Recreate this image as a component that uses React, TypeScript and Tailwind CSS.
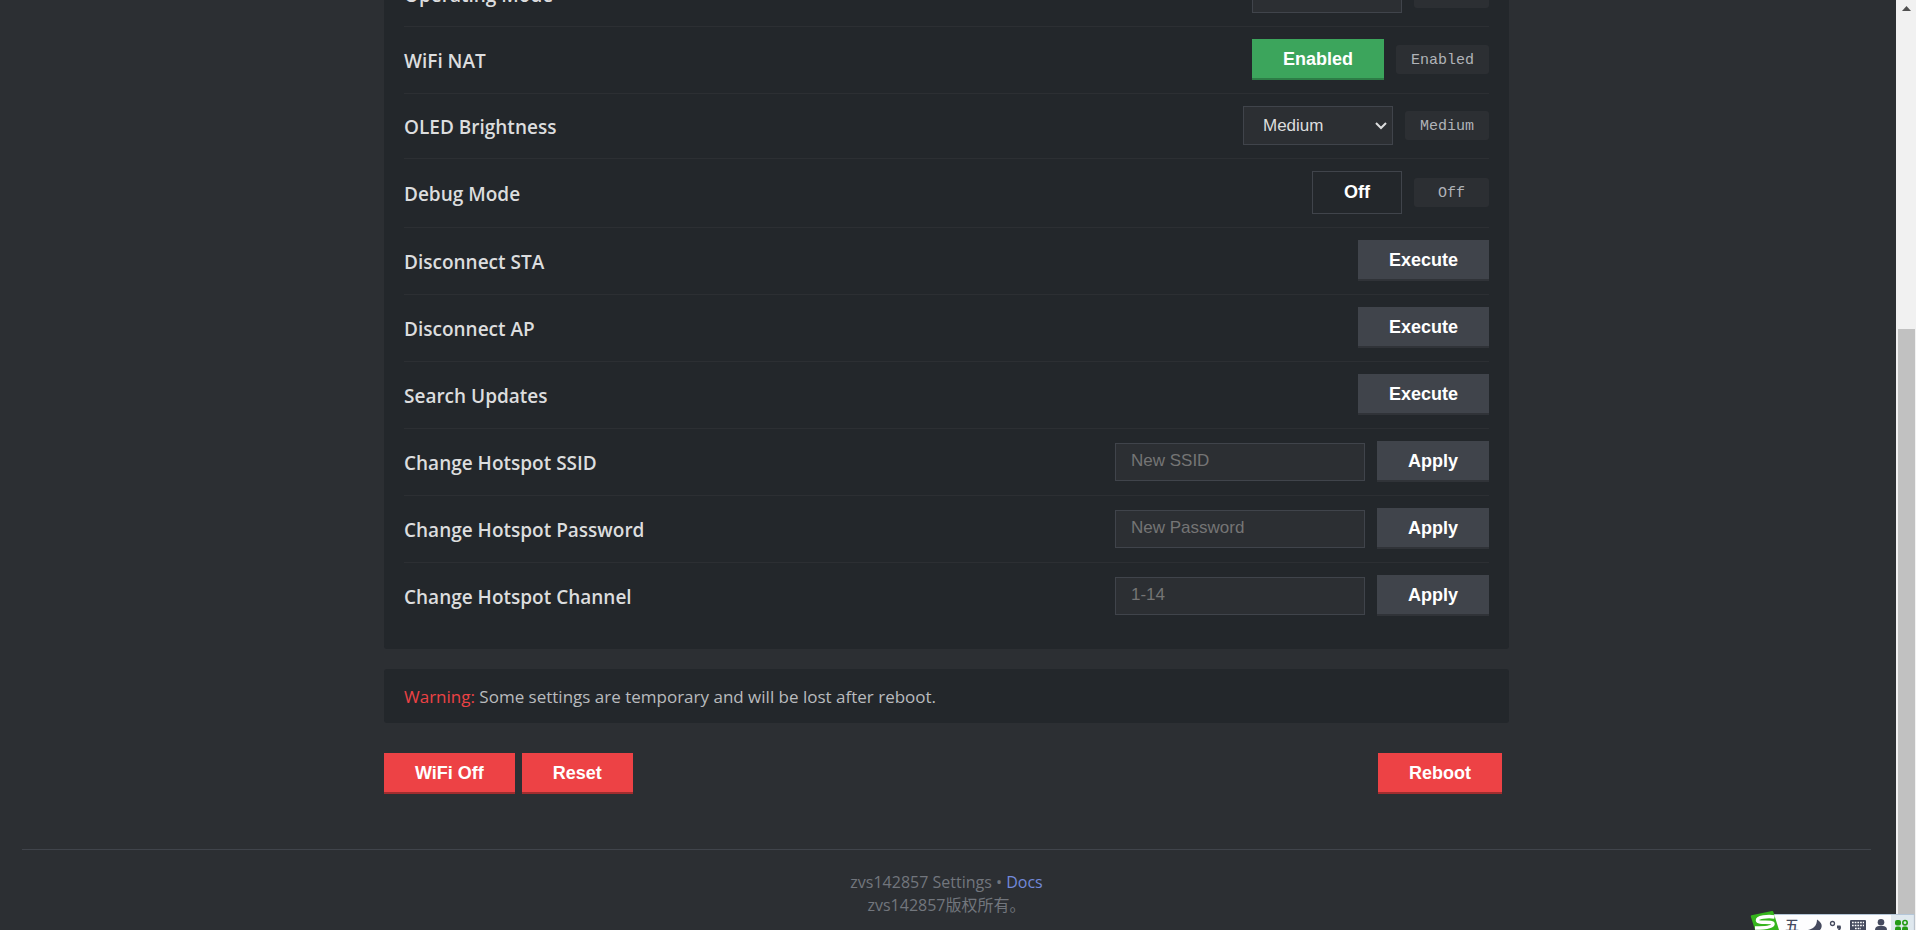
import { ReactNode } from 'react';
import clsx from 'clsx';

const tones = {
    gray: 'bg-[#40444b] border-b-2 border-[#303338]',
    green: 'bg-[#3ca55c] border-b-2 border-[#2d7d46]',
    red: 'bg-[#ed4245] border-b-2 border-[#a12d2f]',
    outline: 'border border-[#40444b] pb-[2px]',
};

function Button({ tone, className, children }: { tone: keyof typeof tones; className?: string; children: ReactNode }) {
    return (
        <button
            type="button"
            className={clsx(
                "shrink-0 px-[31px] text-lg font-bold text-white font-['Liberation_Sans',sans-serif]",
                tone === 'outline' ? 'h-[43px]' : 'h-[41px]',
                tones[tone],
                className
            )}
        >
            {children}
        </button>
    );
}

function Badge({ children }: { children: ReactNode }) {
    return (
        <span className="flex h-[29px] min-w-[75px] items-center justify-center rounded-[3px] bg-[#2c2f33] px-[15px] pt-[3px] text-[15px] text-[#b0b3b8] font-['Liberation_Mono',monospace]">
            {children}
        </span>
    );
}

function Row({ label, htmlFor, last, children }: { label: string; htmlFor?: string; last?: boolean; children: ReactNode }) {
    return (
        <div className={clsx('flex items-center justify-between pt-3 pb-[13px]', !last && 'border-b border-[#2c2f33]')}>
            <label htmlFor={htmlFor} className="pt-[2px] text-[19px] leading-6 font-semibold text-[#dcddde]">
                {label}
            </label>
            <div className="flex items-center gap-3">{children}</div>
        </div>
    );
}

function Select({ id, options, value }: { id: string; options: string[]; value: string }) {
    return (
        <div className="relative">
            <select
                id={id}
                defaultValue={value}
                className="block h-[39px] w-[150px] appearance-none border border-[#40444b] bg-[#2c2f33] px-[19px] text-[17px] text-[#dcddde] font-['Liberation_Sans',sans-serif]"
            >
                {options.map((o) => (
                    <option key={o}>{o}</option>
                ))}
            </select>
            <svg viewBox="0 0 12 8" className="pointer-events-none absolute top-4 right-[6px] h-2 w-3" fill="none" stroke="#dcddde" strokeWidth="2">
                <path d="M1 1l5 5 5-5" />
            </svg>
        </div>
    );
}

function TextInput({ id, placeholder }: { id: string; placeholder: string }) {
    return (
        <input
            id={id}
            placeholder={placeholder}
            className="h-[38px] w-[250px] border border-[#40444b] bg-[#2c2f33] px-[15px] pb-[2px] text-[17px] text-[#dcddde] placeholder:text-[#757575] font-['Liberation_Sans',sans-serif]"
        />
    );
}

// Input method toolbar that floats over the bottom right corner
function ImeBar() {
    return (
        <svg viewBox="0 0 168 20" className="absolute right-0 bottom-0 h-5 w-[168px]">
            <rect x="20" y="4" width="146" height="16" fill="#fdfdfe" />
            <rect x="143" y="5" width="22" height="15" fill="#dfe8ee" />
            <path d="M20 4.500h146v16" stroke="#b4c6d8" fill="none" />
            <path d="M3.500 5.200L24 1q1-.2 1.300.8L31 20H7L2.800 6.500q-.3-1 .7-1.300z" fill="#35b41c" />
            <path d="M26.500 7C20 6 9 7 9.500 10.500S25 10.500 25 14 14 18 7 18" stroke="#fff" strokeWidth="3.500" fill="none" />
            <text x="37" y="20" fontSize="14" fontWeight="500" fill="#454a5e" className="font-['Noto_Sans_CJK_SC',sans-serif]">五</text>
            <path d="M69 9.500c5 3 6 7 3 10.500H60c5-1 9-4 9-10.500z" fill="#454a5e" />
            <circle cx="84.500" cy="13.500" r="2" fill="none" stroke="#454a5e" strokeWidth="1.300" />
            <path d="M89 15.500h3.500c1 2 .3 3.500-.5 4.500h-2l.6-1.500H89z" fill="#454a5e" />
            <rect x="102" y="10" width="16" height="11" rx="1" fill="#454a5e" />
            <path d="M104 12.500h12M104 15.500h12M107 18.500h6" stroke="#fdfdfe" strokeWidth="1.500" strokeDasharray="1.700 1" />
            <circle cx="133" cy="12.300" r="3.300" fill="#454a5e" />
            <path d="M127 20c0-3 2-4 4-4h4c2 0 4 1 4 4z" fill="#454a5e" />
            <g fill="#259b16">
                <rect x="147" y="10" width="6" height="5.500" rx="2" />
                <rect x="147" y="16.500" width="6" height="5.500" rx="2" />
                <rect x="154" y="16.500" width="6" height="5.500" rx="2" />
            </g>
            <circle cx="157" cy="12.700" r="2.200" fill="none" stroke="#259b16" strokeWidth="1.600" />
        </svg>
    );
}

export default function App() {
    return (
        <div className="relative flex h-screen overflow-hidden bg-[#2c2f33] font-['Open_Sans','Noto_Sans_CJK_SC',sans-serif]">
            <div className="-mt-[38px] flex-1 pr-[25px] pl-[22px]">
                <main className="mx-auto max-w-[1125px]">
                    <section className="rounded-[3px] bg-[#23272b] px-5 pb-5">
                        <Row label="Operating Mode" htmlFor="mode">
                            <Select id="mode" options={['STA', 'AP', 'AP+STA']} value="STA" />
                            <Badge>STA</Badge>
                        </Row>
                        <Row label="WiFi NAT">
                            <Button tone="green">Enabled</Button>
                            <Badge>Enabled</Badge>
                        </Row>
                        <Row label="OLED Brightness" htmlFor="brightness">
                            <Select id="brightness" options={['Low', 'Medium', 'High']} value="Medium" />
                            <Badge>Medium</Badge>
                        </Row>
                        <Row label="Debug Mode">
                            <Button tone="outline">Off</Button>
                            <Badge>Off</Badge>
                        </Row>
                        <Row label="Disconnect STA">
                            <Button tone="gray">Execute</Button>
                        </Row>
                        <Row label="Disconnect AP">
                            <Button tone="gray">Execute</Button>
                        </Row>
                        <Row label="Search Updates">
                            <Button tone="gray">Execute</Button>
                        </Row>
                        <Row label="Change Hotspot SSID" htmlFor="ssid">
                            <TextInput id="ssid" placeholder="New SSID" />
                            <Button tone="gray">Apply</Button>
                        </Row>
                        <Row label="Change Hotspot Password" htmlFor="password">
                            <TextInput id="password" placeholder="New Password" />
                            <Button tone="gray">Apply</Button>
                        </Row>
                        <Row label="Change Hotspot Channel" htmlFor="channel" last>
                            <TextInput id="channel" placeholder="1-14" />
                            <Button tone="gray">Apply</Button>
                        </Row>
                    </section>

                    <p className="mt-5 rounded-[3px] bg-[#23272b] px-5 pt-4 pb-[14px] text-[17px] leading-6 text-[#b9bbbe]">
                        <span className="text-[#ed4245]">Warning:</span> Some settings are temporary and will be lost after reboot.
                    </p>

                    <div className="mt-[30px] flex gap-[7px] pr-[7px]">
                        <Button tone="red">WiFi Off</Button>
                        <Button tone="red">Reset</Button>
                        <Button tone="red" className="ml-auto">Reboot</Button>
                    </div>
                </main>

                <footer className="mt-[55px] border-t border-[#40444b] pt-[21px] text-center text-base leading-[23px] text-[#72767d]">
                    <p>
                        zvs142857 Settings • <a href="#docs" className="text-[#7289da]">Docs</a>
                    </p>
                    <p>zvs142857版权所有。</p>
                </footer>
            </div>

            <div className="w-5 shrink-0 bg-[#f1f1f1] pr-[1px] pl-[2px]">
                <svg viewBox="0 0 17 17" className="h-[17px] w-[17px]">
                    <path d="M4 11l4.500-5 4.500 5z" fill="#505050" />
                </svg>
                <div className="mt-[312px] h-full bg-[#c1c1c1]" />
            </div>
            <ImeBar />
        </div>
    );
}
